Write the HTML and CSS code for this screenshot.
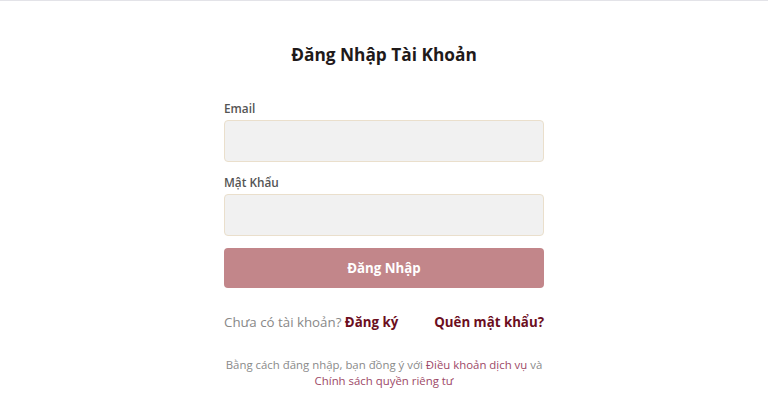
FILE: index.html
```html
<!DOCTYPE html>
<html lang="vi">
<head>
<meta charset="utf-8">
<title>Đăng Nhập</title>
<link rel="stylesheet" href="styles.css">
</head>
<body>
<main class="page">
  <form class="card">
    <h1 class="title">Đăng Nhập Tài Khoản</h1>
    <div class="field">
      <label class="label" for="email">Email</label>
      <input class="input" id="email" type="email">
    </div>
    <div class="field">
      <label class="label" for="pw">Mật Khẩu</label>
      <input class="input" id="pw" type="password">
    </div>
    <button class="btn" type="button">Đăng Nhập</button>
    <div class="links">
      <span class="muted">Chưa có tài khoản? <a class="strong-link" href="#">Đăng ký</a></span>
      <a class="strong-link" href="#">Quên mật khẩu?</a>
    </div>
    <p class="terms">Bằng cách đăng nhập, bạn đồng ý với <a class="soft-link" href="#">Điều khoản dịch vụ</a> và <a class="soft-link" href="#">Chính sách quyền riêng tư</a></p>
  </form>
</main>
</body>
</html>
```
FILE: styles.css
```css
* { box-sizing: border-box; }
html, body { margin: 0; padding: 0; background: #fff; }
body {
  font-family: "Open Sans", "Noto Sans", sans-serif;
  border-top: 1px solid #e3e3e8;
  color: #222;
}
.page { display: flex; justify-content: center; }
.card { width: 320px; display: flex; flex-direction: column; padding-top: 42px; }
.title {
  margin: 0 0 33px;
  font-size: 17.3px;
  line-height: 24px;
  font-weight: 700;
  text-align: center;
  color: #1f1a1a;
}
.field { display: flex; flex-direction: column; margin-bottom: 12px; }
.label {
  font-size: 11.8px;
  line-height: 16px;
  font-weight: 600;
  color: #555;
  margin-bottom: 4px;
}
.input {
  height: 42px;
  border: 1px solid #eadfcc;
  border-radius: 4px;
  background: #f1f1f1;
  font: inherit;
}
.btn {
  height: 40px;
  border: none;
  border-radius: 4px;
  background: #c2868a;
  color: #fff;
  font-family: inherit;
  font-size: 13.3px;
  font-weight: 700;
}
.links {
  margin-top: 24px;
  display: flex;
  justify-content: space-between;
  align-items: center;
  font-size: 13.3px;
  line-height: 20px;
}
.muted { color: #888; }
.strong-link { color: #6c0e1e; font-weight: 700; text-decoration: none; }
.terms {
  margin: 25px 0 0;
  text-align: center;
  font-size: 11.4px;
  line-height: 16px;
  color: #8a8a8a;
}
.soft-link { color: #9d4866; text-decoration: none; }
```
